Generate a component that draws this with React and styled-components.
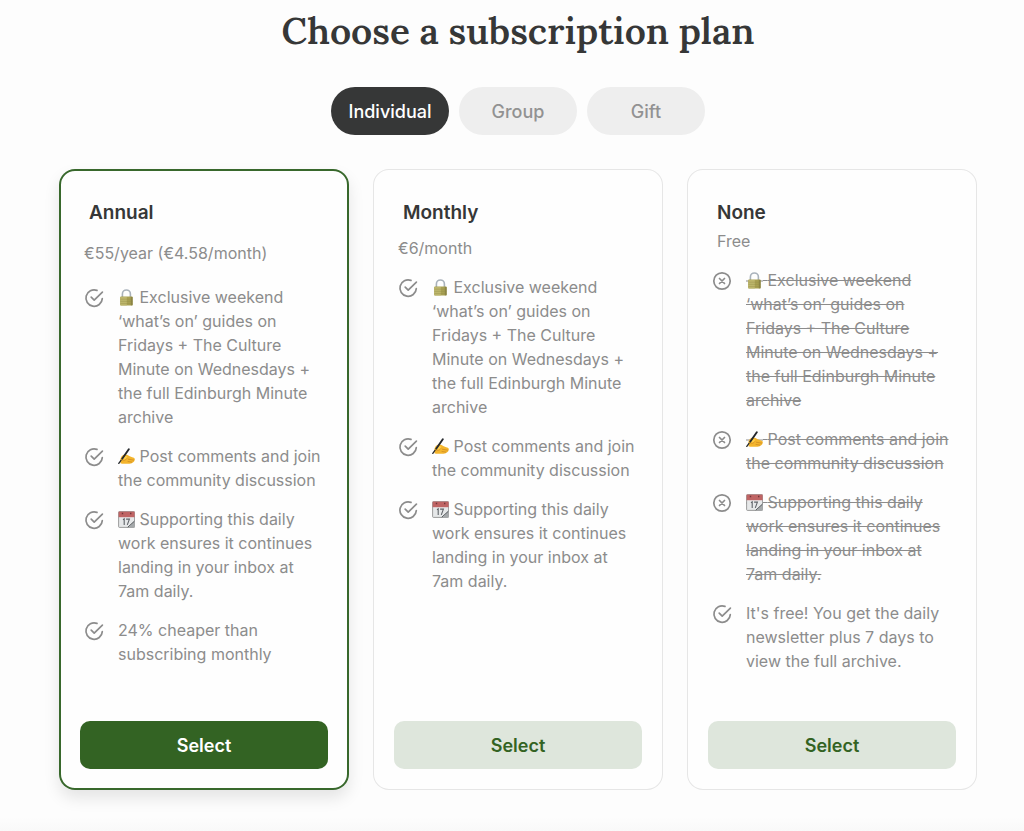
import React, { useState } from "react";
import styled, { createGlobalStyle } from "styled-components";

const LOCKED = { icon: "lock", text: "Exclusive weekend ‘what’s on’ guides on Fridays + The Culture Minute on Wednesdays + the full Edinburgh Minute archive" };
const COMMENTS = { icon: "hand", text: "Post comments and join the community discussion" };
const SUPPORT = { icon: "calendar", text: "Supporting this daily work ensures it continues landing in your inbox at 7am daily." };

const tabs = ["Individual", "Group", "Gift"];

const plans = [
  {
    name: "Annual",
    price: "€55/year (€4.58/month)",
    layout: "picker",
    features: [LOCKED, COMMENTS, SUPPORT, { text: "24% cheaper than subscribing monthly" }]
  },
  {
    name: "Monthly",
    price: "€6/month",
    layout: "single",
    features: [LOCKED, COMMENTS, SUPPORT]
  },
  {
    name: "None",
    price: "Free",
    layout: "free",
    features: [
      { ...LOCKED, missing: true },
      { ...COMMENTS, missing: true },
      { ...SUPPORT, missing: true },
      { text: "It's free! You get the daily newsletter plus 7 days to view the full archive." }
    ]
  }
];

const CheckIcon = () => (
  <Mark viewBox="0 0 20 20" aria-hidden="true">
    <path d="M13 2.4A8.2 8.2 0 1 0 18.3 10.6" />
    <path d="M7.2 9.2l3 3L18.4 4.2" />
  </Mark>
);

const CrossIcon = () => (
  <Mark viewBox="0 0 20 20" aria-hidden="true">
    <circle cx="10" cy="10" r="8.2" />
    <path d="M7.5 7.5l5 5M12.5 7.5l-5 5" />
  </Mark>
);

const emojis = {
  lock: (
    <>
      <path d="M4.4 8.6V5a4 4 0 0 1 8 0v3.6" fill="none" stroke="#a9b2bb" strokeWidth="1.6" />
      <rect x="2.2" y="7.6" width="12.4" height="9" rx="0.8" fill="#a8a052" />
      <path d="M2.4 8h6.4v8.4H2.4z" fill="#bdb66c" />
      <path d="M2.4 10.2h12M2.4 12.4h12M2.4 14.6h12" stroke="#968e48" strokeWidth="0.4" />
      <path d="M12.8 7.9h1.8v8.4h-1.8z" fill="#8b8445" />
    </>
  ),
  hand: (
    <>
      <path d="M2.6 15.2C2 12.6 2.2 9.6 4.2 7.8c1.6-1.4 4-1.5 5.8-.6 1.6.8 3 1.9 5 2.2 1.9.4 2.3 2 1.4 3 .1 1.3-.9 1.9-1.9 2-.8 1-2.6 1.3-4.3 1.3H4z" fill="#f4b52c" />
      <path d="M10 11.2l6.2 1M9.6 13.4l4.8.8" stroke="#c98722" strokeWidth="0.7" fill="none" />
      <path d="M3.6 10.6c1-2.8 3.8-3.4 5.8-1.9l-2.4 3.1z" fill="#ffd04d" />
      <path d="M4.4 12.6c1.8.2 3.4-.6 4.6-2.2" stroke="#d8952a" strokeWidth="0.9" fill="none" />
      <path d="M0.8 15.4L3 12.4" stroke="#25282c" strokeWidth="1.3" strokeLinecap="round" />
      <path d="M4.2 10.8L10.8 1.2" stroke="#25282c" strokeWidth="1.9" strokeLinecap="round" />
    </>
  ),
  calendar: (
    <>
      <rect x="0.6" y="0.6" width="16" height="15.8" rx="0.8" fill="#e6e8e9" stroke="#858585" strokeWidth="0.8" />
      <path d="M0.6 0.6h16v5.6H.6z" fill="#bf6464" />
      <path d="M3.8 2.5h1.4M12 2.5h1.4" stroke="#703538" strokeWidth="1.5" />
      <path d="M5 8.7l1.2-.8v6M8.1 8.1h3.3l-2.1 5.8" fill="none" stroke="#5f6368" strokeWidth="1.1" />
      <path d="M16.6 9.4v7h-6.1z" fill="#a4a8aa" />
      <path d="M9.8 16.2l6.6-6" stroke="#55595c" strokeWidth="1" />
    </>
  )
};

const App = () => {
  const [tab, setTab] = useState("Individual");

  return (
    <>
      <GlobalStyle />
      <Page>
        <Title>Choose a subscription plan</Title>
        <Tabs>
          {tabs.map(name => (
            <Tab key={name} type="button" $active={name === tab} aria-pressed={name === tab} onClick={() => setTab(name)}>
              {name}
            </Tab>
          ))}
        </Tabs>
        <Plans>
          {plans.map((plan, i) => (
            <Plan key={plan.name} $featured={i === 0}>
              <PlanName>{plan.name}</PlanName>
              <Price $layout={plan.layout}>{plan.price}</Price>
              <Features>
                {plan.features.map(({ icon, text, missing }) => (
                  <Feature key={text}>
                    {missing ? <CrossIcon /> : <CheckIcon />}
                    <FeatureText $missing={missing}>
                      {icon && (
                        <Emoji viewBox="0 0 17 17" aria-hidden="true">
                          {missing && <path d="M0 9h17" stroke="#8c8c8c" />}
                          {emojis[icon]}
                        </Emoji>
                      )}
                      {icon && " "}
                      {text}
                    </FeatureText>
                  </Feature>
                ))}
              </Features>
              <SelectBtn type="button" $primary={i === 0}>
                Select
              </SelectBtn>
            </Plan>
          ))}
        </Plans>
      </Page>
    </>
  );
};

const GlobalStyle = createGlobalStyle`
  * {
    box-sizing: border-box;
  }
  body {
    margin: 0;
    background: #fdfdfd;
    font-family: Inter, "Liberation Sans", sans-serif;
    color: #363737;
  }
  button {
    font-family: inherit;
    cursor: pointer;
  }
`;

const Page = styled.main`
  display: flex;
  flex-direction: column;
  padding: 3px 47px 41px 59px;
  background: linear-gradient(to top, #f9f9f9, #fdfdfd 14px);
`;

const Title = styled.h1`
  margin: 0;
  font-family: Lora, "Liberation Serif", serif;
  font-size: 37px;
  font-weight: 600;
  line-height: 56px;
  text-align: center;
`;

const Tabs = styled.div`
  display: flex;
  justify-content: center;
  gap: 10px;
  margin: 28px 0 34px;
`;

const Tab = styled.button`
  width: 118px;
  height: 48px;
  padding: 0;
  border: none;
  border-radius: 24px;
  font-size: 18px;
  font-weight: 500;
  background: ${({ $active }) => ($active ? "#363737" : "#eeeeee")};
  color: ${({ $active }) => ($active ? "#ffffff" : "#929292")};
`;

const Plans = styled.div`
  display: grid;
  grid-template-columns: repeat(3, 1fr);
  gap: 24px;

  @media screen and (max-width: 800px) {
    grid-template-columns: 1fr;
  }
`;

const Plan = styled.section`
  display: flex;
  flex-direction: column;
  padding: 32px 21px 21px;
  border-radius: 16px;
  background: #fefefe;
  box-shadow: ${({ $featured }) =>
    $featured
      ? "inset 0 0 0 2px #38682c, 0 8px 16px rgba(0, 0, 0, 0.1)"
      : "inset 0 0 0 1px #e6e6e6"};
`;

const PlanName = styled.h2`
  margin: 0 9px;
  font-size: 19px;
  font-weight: 600;
  line-height: 24px;
`;

const priceMargins = {
  picker: "16px 4px 20px",
  single: "11px 4px 15px",
  free: "4px 9px 15px"
};

const Price = styled.p`
  margin: ${({ $layout }) => priceMargins[$layout]};
  font-size: 16px;
  line-height: 24px;
  color: #8c8c8c;
`;

const Features = styled.ul`
  display: flex;
  flex-direction: column;
  gap: 15px;
  margin: 0 0 48px;
  padding: 0 0 0 4px;
  list-style: none;
`;

const Feature = styled.li`
  display: flex;
  gap: 14px;
`;

const Mark = styled.svg`
  flex: none;
  width: 20px;
  height: 20px;
  margin-top: 3px;
  fill: none;
  stroke: #8c8c8c;
  stroke-width: 1.7;
  stroke-linecap: round;
  stroke-linejoin: round;
`;

const FeatureText = styled.span`
  font-size: 16px;
  line-height: 24px;
  color: #8c8c8c;
  text-decoration: ${({ $missing }) => ($missing ? "line-through" : "none")};
`;

const Emoji = styled.svg`
  width: 17px;
  height: 17px;
  vertical-align: -3px;
`;

const SelectBtn = styled.button`
  height: 48px;
  margin-top: auto;
  border: none;
  border-radius: 10px;
  font-size: 18px;
  font-weight: 600;
  background: ${({ $primary }) => ($primary ? "#336323" : "#dee6dc")};
  color: ${({ $primary }) => ($primary ? "#ffffff" : "#336323")};
`;

export default App;
